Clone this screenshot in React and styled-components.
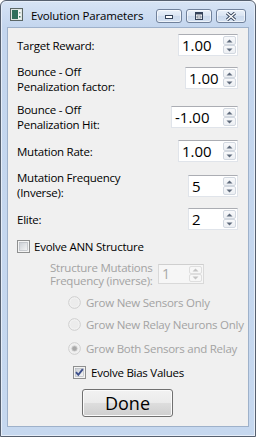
import React from 'react';
import styled, { createGlobalStyle } from 'styled-components';

const Global = createGlobalStyle`
  html, body { margin: 0; padding: 0; background: #ffffff; }
  body { font-family: "Open Sans", "Noto Sans", sans-serif; }
  #root { width: 256px; height: 437px; }
`;

const Window = styled.div`
  box-sizing: border-box;
  width: 256px;
  height: 437px;
  border: 1px solid #56606f;
  border-radius: 6px 6px 0 0;
  background: linear-gradient(#d7e4f5, #c4d6ee 26px, #c6d8ef);
  box-shadow: inset 0 0 0 1px #e6eef9;
  padding: 0 6px 9px 6px;
  display: flex;
  flex-direction: column;
`;

const TitleBar = styled.div`
  height: 26px;
  display: flex;
  align-items: flex-start;
`;

const TitleIcon = styled.svg`
  margin: 7px 0 0 3px;
  flex: none;
`;

const TitleText = styled.div`
  margin: 6px 0 0 8px;
  font-size: 11.5px;
  letter-spacing: -0.15px;
  line-height: 17px;
  color: #000;
  flex: 1;
  white-space: nowrap;
`;

const CaptionGroup = styled.div`
  display: flex;
  gap: 4px;
  margin: 8px 3px 0 0;
`;

const CaptionButton = styled.div`
  box-sizing: border-box;
  width: ${p => p.$w}px;
  height: 14px;
  border: 1px solid #70819b;
  border-radius: 3px;
  background: linear-gradient(#eaf1fa, #d9e4f2 50%, #cbd9ec 51%, #d4e1f2);
  box-shadow: inset 0 0 0 1px rgba(255,255,255,0.6);
  display: flex;
  align-items: center;
  justify-content: center;
`;

const Client = styled.div`
  flex: 1;
  min-height: 0;
  border: 1px solid #9eb1ca;
  background: #f0f0f0;
  padding: 6px 10px 0 9px;
  display: flex;
  flex-direction: column;
`;

const FieldRow = styled.div`
  display: flex;
  justify-content: space-between;
  align-items: ${p => (p.$top ? 'flex-start' : 'center')};
  margin-top: ${p => p.$mt || 0}px;
`;

const textStyle = `
  font-size: 11.5px;
  letter-spacing: -0.25px;
  white-space: nowrap;
`;

const Label = styled.div`
  ${textStyle}
  line-height: 15px;
  color: #000;
`;

const Spin = styled.div`
  box-sizing: border-box;
  width: ${p => p.$w}px;
  height: ${p => p.$h || 22}px;
  margin-top: ${p => p.$offset || 0}px;
  display: flex;
  background: ${p => (p.$disabled ? '#f6f6f6' : '#fff')};
  border: 1px solid ${p => (p.$disabled ? '#d9d9d9' : '#e0e4ea')};
  border-top-color: ${p => (p.$disabled ? '#cfcfcf' : '#abadb3')};
  padding: 1px;
  flex: none;
`;

const SpinValue = styled.div`
  flex: 1;
  padding-left: 2px;
  font-size: ${p => (p.$disabled ? 14 : 15)}px;
  line-height: ${p => (p.$disabled ? 16 : 18)}px;
  color: ${p => (p.$disabled ? '#a8a8a8' : '#000')};
`;

const ArrowCol = styled.div`
  width: 13px;
  display: flex;
  flex-direction: column;
`;

const ArrowBtn = styled.div`
  flex: 1;
  box-sizing: border-box;
  border: 1px solid ${p => (p.$disabled ? '#dedede' : '#d2d8e0')};
  border-radius: 2px;
  background: ${p => (p.$disabled ? '#f7f7f7' : 'linear-gradient(#f8f9fb, #eceff3)')};
  display: flex;
  align-items: center;
  justify-content: center;
`;

const CheckRow = styled.div`
  display: flex;
  align-items: center;
  margin-top: ${p => p.$mt}px;
  margin-left: ${p => p.$ml}px;
  gap: ${p => p.$gap}px;
  & > svg { flex: none; }
`;

const OptText = styled.span`
  ${textStyle}
  line-height: 15px;
  color: ${p => (p.$disabled ? '#a3a3a3' : '#000')};
`;

const StructureRow = styled.div`
  display: flex;
  align-items: center;
  margin-top: ${p => p.$mt}px;
  margin-left: 33px;
  gap: 5px;
`;

const StructLabel = styled.div`
  ${textStyle}
  width: 103px;
  line-height: 13px;
  color: #a3a3a3;
`;

const DoneButton = styled.button`
  align-self: center;
  margin-top: 9px;
  box-sizing: border-box;
  width: 91px;
  height: 28px;
  border: 1px solid #707070;
  border-radius: 3px;
  background: linear-gradient(#f2f2f2, #ebebeb 48%, #dddddd 52%, #cfcfcf);
  box-shadow: inset 0 0 0 1px #fbfbfb;
  font-family: "Open Sans", "Noto Sans", sans-serif;
  font-size: 18px;
  line-height: 24px;
  color: #000;
  padding: 0;
`;

const Arrow = ({ up, disabled }) => (
  <svg width="7" height="4" viewBox="0 0 7 4">
    <path d={up ? 'M0.5 3.5 L3.5 0.5 L6.5 3.5 Z' : 'M0.5 0.5 L3.5 3.5 L6.5 0.5 Z'} fill={disabled ? '#c4c4c4' : '#5f6b7c'} />
  </svg>
);

const SpinBox = ({ value, w, h, offset, disabled }) => (
  <Spin $w={w} $h={h} $offset={offset} $disabled={disabled}>
    <SpinValue $disabled={disabled}>{value}</SpinValue>
    <ArrowCol>
      <ArrowBtn $disabled={disabled}><Arrow up disabled={disabled} /></ArrowBtn>
      <ArrowBtn $disabled={disabled}><Arrow disabled={disabled} /></ArrowBtn>
    </ArrowCol>
  </Spin>
);

const CheckBox = ({ checked, id }) => (
  <svg width="13" height="13" viewBox="0 0 13 13">
    <defs>
      <linearGradient id={id} x1="0" y1="0" x2="1" y2="1">
        <stop offset="0" stopColor="#cbcfd5" />
        <stop offset="1" stopColor="#f6f6f6" />
      </linearGradient>
    </defs>
    <rect x="0.5" y="0.5" width="12" height="12" fill="#f4f4f4" stroke="#8e8f8f" />
    <rect x="2.5" y="2.5" width="8" height="8" fill={`url(#${id})`} stroke="#aeb3b9" strokeWidth="0.6" />
    {checked && (
      <path d="M3 6.2 L5.3 8.8 L9.8 3.2" fill="none" stroke="#3c4f8c" strokeWidth="1.9" />
    )}
  </svg>
);

const Radio = ({ selected }) => (
  <svg width="13" height="13" viewBox="0 0 13 13">
    <circle cx="6.5" cy="6.5" r="5.8" fill="#f4f4f4" stroke="#cdcdcd" />
    <circle cx="6.5" cy="6.5" r="4.3" fill="#ececec" />
    {selected && <circle cx="6.5" cy="6.5" r="2.6" fill="#a9a9a9" stroke="#c8c8c8" strokeWidth="0.8" />}
  </svg>
);

const fields = [
  { label: ['Target Reward:'], value: '1.00', w: 60 },
  { label: ['Bounce - Off', 'Penalization factor:'], value: '1.00', w: 53, offset: 3 },
  { label: ['Bounce - Off', 'Penalization Hit:'], value: '-1.00', w: 67, offset: 4 },
  { label: ['Mutation Rate:'], value: '1.00', w: 60 },
  { label: ['Mutation Frequency', '(Inverse):'], value: '5', w: 50, offset: 5 },
  { label: ['Elite:'], value: '2', w: 50 },
];

export default function App() {
  return (
    <>
      <Global />
      <Window>
        <TitleBar>
          <TitleIcon width="13" height="13" viewBox="0 0 13 13">
            <rect x="0.5" y="0.5" width="12" height="12" fill="#dfe6e4" stroke="#5b6766" />
            <rect x="2" y="2" width="6" height="9" fill="#2f6e5c" />
            <rect x="8" y="2" width="3" height="9" fill="#f4f6f5" />
            <rect x="9" y="8" width="1.5" height="1.5" fill="#2f6e5c" />
            <rect x="9" y="4" width="1.5" height="1.5" fill="#7d9a90" />
          </TitleIcon>
          <TitleText>Evolution Parameters</TitleText>
          <CaptionGroup>
            <CaptionButton $w={26}>
              <svg width="10" height="6" viewBox="0 0 10 6">
                <rect x="1.5" y="2.5" width="7" height="3" fill="#fff" stroke="#34435a" />
              </svg>
            </CaptionButton>
            <CaptionButton $w={26}>
              <svg width="10" height="8" viewBox="0 0 10 8">
                <rect x="1.5" y="0.5" width="7" height="7" fill="#fff" stroke="#34435a" />
                <rect x="1.5" y="0.5" width="7" height="2" fill="#34435a" />
                <rect x="3" y="4" width="4" height="2" fill="#fff" stroke="#34435a" strokeWidth="0.6" />
              </svg>
            </CaptionButton>
            <CaptionButton $w={30}>
              <svg width="12" height="9" viewBox="0 0 12 9">
                <path d="M2 1 L10 8 M10 1 L2 8" stroke="#34435a" strokeWidth="3.2" />
                <path d="M2 1 L10 8 M10 1 L2 8" stroke="#fff" strokeWidth="1.4" />
              </svg>
            </CaptionButton>
          </CaptionGroup>
        </TitleBar>
        <Client>
          {fields.map((f, i) => (
            <FieldRow key={i} $top={f.label.length > 1} $mt={i === 0 ? 0 : 8}>
              <Label>
                {f.label.map((l, j) => (
                  <div key={j}>{l}</div>
                ))}
              </Label>
              <SpinBox value={f.value} w={f.w} offset={f.offset} />
            </FieldRow>
          ))}
          <CheckRow $mt={9} $ml={0} $gap={4}>
            <CheckBox id="cb1" />
            <OptText>Evolve ANN Structure</OptText>
          </CheckRow>
          <StructureRow $mt={7}>
            <StructLabel>
              <div>Structure Mutations</div>
              <div>Frequency (inverse):</div>
            </StructLabel>
            <SpinBox value="1" w={46} h={20} disabled />
          </StructureRow>
          <CheckRow $mt={8} $ml={51} $gap={5}>
            <Radio />
            <OptText $disabled>Grow New Sensors Only</OptText>
          </CheckRow>
          <CheckRow $mt={7} $ml={51} $gap={5}>
            <Radio />
            <OptText $disabled>Grow New Relay Neurons Only</OptText>
          </CheckRow>
          <CheckRow $mt={9} $ml={51} $gap={5}>
            <Radio selected />
            <OptText $disabled>Grow Both Sensors and Relay</OptText>
          </CheckRow>
          <CheckRow $mt={9} $ml={56} $gap={5}>
            <CheckBox id="cb2" checked />
            <OptText>Evolve Bias Values</OptText>
          </CheckRow>
          <DoneButton>Done</DoneButton>
        </Client>
      </Window>
    </>
  );
}
